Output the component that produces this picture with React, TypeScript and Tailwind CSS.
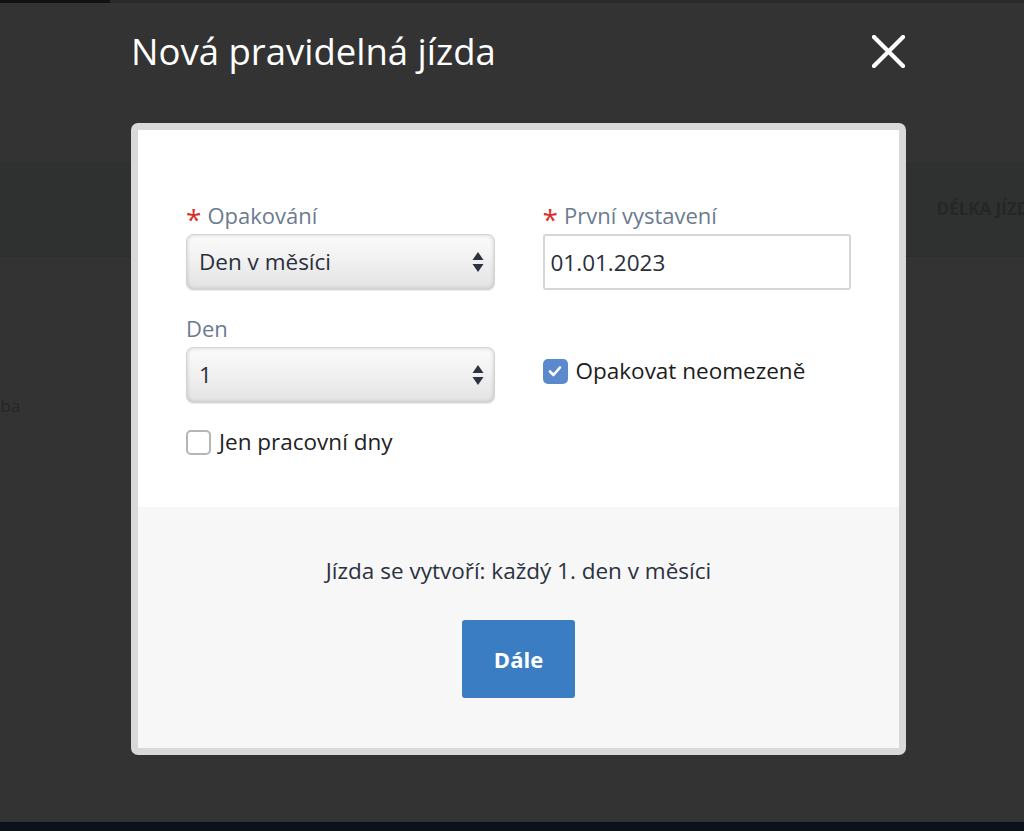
import { useState } from "react";

const font = { fontFamily: '"Open Sans", "Noto Sans", sans-serif' };

function SelectArrows() {
  return (
    <svg width="12" height="24" viewBox="0 0 12 24" className="pointer-events-none absolute right-[11px] top-1/2 -translate-y-1/2">
      <path d="M6 2 L11.5 10 L0.5 10 Z" fill="#2b3240" />
      <path d="M0.5 14 L11.5 14 L6 22 Z" fill="#2b3240" />
    </svg>
  );
}

function FakeSelect({ value, options }: { value: string; options: string[] }) {
  const [val, setVal] = useState(value);
  return (
    <div className="relative">
      <select
        value={val}
        onChange={(e) => setVal(e.target.value)}
        className="h-[56px] w-full appearance-none rounded-[7px] border border-[#d3d3d3] bg-gradient-to-b from-[#fbfbfb] via-[#f0f0f0] to-[#e3e3e3] pl-3 pr-8 text-[22.5px] text-[#2a2f3b] shadow-[inset_0_0_4px_rgba(0,0,0,0.18),0_1px_1px_rgba(0,0,0,0.08)] outline-none"
      >
        {options.map((o) => (
          <option key={o} value={o}>
            {o}
          </option>
        ))}
      </select>
      <SelectArrows />
    </div>
  );
}

function Label({ text, required }: { text: string; required?: boolean }) {
  return (
    <div className="mb-[3px] flex h-[24px] items-start text-[22px] leading-[16px] text-[#6b7b90]">
      {required && <span className="mr-[6px] -translate-y-[2px] text-[28px] leading-none text-[#d7302a]">*</span>}
      {text}
    </div>
  );
}

function Check({ checked, onToggle }: { checked: boolean; onToggle: () => void }) {
  return (
    <span
      onClick={onToggle}
      className={
        checked
          ? "flex h-[25px] w-[25px] shrink-0 items-center justify-center rounded-[5px] bg-[#5b89cd]"
          : "h-[25px] w-[25px] shrink-0 rounded-[5px] border-2 border-[#b5b5b5] bg-white"
      }
    >
      {checked && (
        <svg width="16" height="16" viewBox="0 0 16 16">
          <path d="M3 8.5 L6.5 12 L13 4.5" fill="none" stroke="#fff" strokeWidth="2.6" strokeLinecap="round" strokeLinejoin="round" />
        </svg>
      )}
    </span>
  );
}

export default function App() {
  const [workdays, setWorkdays] = useState(false);
  const [unlimited, setUnlimited] = useState(true);

  return (
    <div className="relative h-[831px] w-full overflow-hidden bg-[#333333]" style={font}>
      {/* page behind overlay */}
      <div className="flex h-[3px]">
        <div className="w-[110px] bg-[#111111]" />
        <div className="flex-1 bg-[#2a2a2a]" />
      </div>
      <div className="mt-[159px] flex h-[95px] items-center justify-end border-b border-[#2c2d2c] bg-[#2f3030]">
        <span className="mr-[-16px] text-[17px] font-bold text-[#252626]">DÉLKA JÍZDY</span>
      </div>
      <div className="-ml-[22px] mt-[136px] text-[17px] text-[#262626]">Doba</div>
      <div className="absolute bottom-0 left-0 right-0 h-[9px] bg-[#0c1219]" />

      {/* modal */}
      <div className="absolute inset-0 pl-[131px]">
        <div className="w-[775px] pt-[27px]">
          <div className="flex items-center justify-between pr-[1px]">
            <h1 className="text-[36.5px] leading-[48px] text-white">Nová pravidelná jízda</h1>
            <svg width="33" height="33" viewBox="0 0 33 33">
              <path d="M2 2 L31 31 M31 2 L2 31" stroke="#ffffff" strokeWidth="4.2" strokeLinecap="square" />
            </svg>
          </div>

          <div className="mt-[48px] rounded-[7px] border-[7px] border-[#d9d9d9] bg-white">
            <div className="grid grid-cols-2 gap-x-[48px] px-[48px] pb-[51px] pt-[77px]">
              <div>
                <Label text="Opakování" required />
                <FakeSelect value="Den v měsíci" options={["Den v měsíci", "Den v týdnu", "Každý den"]} />
                <div className="mt-[30px]">
                  <Label text="Den" />
                  <FakeSelect value="1" options={Array.from({ length: 31 }, (_, i) => String(i + 1))} />
                </div>
                <label className="mt-[25px] flex cursor-pointer items-center gap-[8px] text-[22.5px] leading-[28px] text-[#222]">
                  <Check checked={workdays} onToggle={() => setWorkdays(!workdays)} />
                  Jen pracovní dny
                </label>
              </div>

              <div>
                <Label text="První vystavení" required />
                <input
                  defaultValue="01.01.2023"
                  className="h-[56px] w-full rounded-[3px] border-2 border-[#d6d6d6] bg-white px-[6px] text-[22.5px] text-[#2a2f3b] outline-none"
                />
                <label className="mt-[67px] flex cursor-pointer items-center gap-[8px] text-[22.5px] leading-[28px] text-[#1c1c1c]">
                  <Check checked={unlimited} onToggle={() => setUnlimited(!unlimited)} />
                  Opakovat neomezeně
                </label>
              </div>
            </div>

            <div className="flex flex-col items-center bg-[#f7f7f7] pb-[50px] pt-[50px]">
              <p className="text-[22.5px] leading-[28px] text-[#2c3140]">Jízda se vytvoří: každý 1. den v měsíci</p>
              <button className="mt-[35px] h-[78px] w-[113px] rounded-[3px] bg-[#3a7dc3] text-[22px] font-bold text-white">
                Dále
              </button>
            </div>
          </div>
        </div>
      </div>
    </div>
  );
}
